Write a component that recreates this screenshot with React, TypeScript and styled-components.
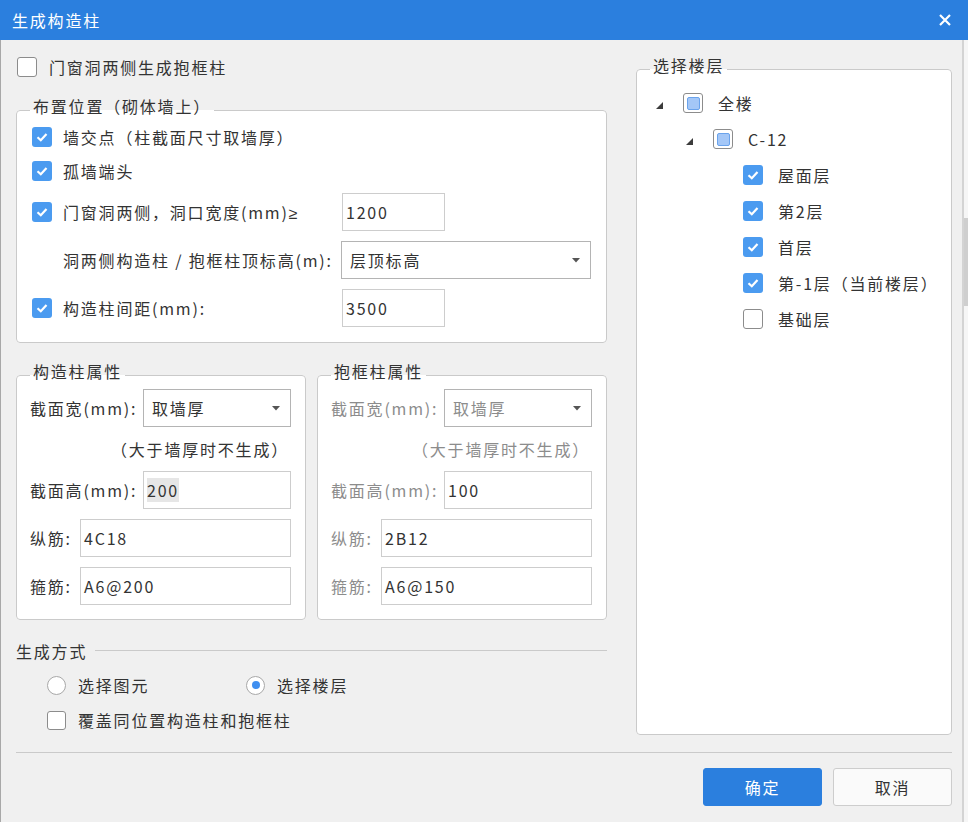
import React from 'react';
import styled, { createGlobalStyle } from 'styled-components';

const GlobalStyle = createGlobalStyle`
  html, body {
    margin: 0;
    padding: 0;
    background: #f0f0f0;
  }
  body {
    font-family: 'Noto Sans CJK SC', 'Noto Sans', sans-serif;
    font-size: 16px;
    letter-spacing: 1.8px;
    color: #333;
  }
  * {
    box-sizing: border-box;
  }
`;

const Window = styled.div`
  width: 968px;
  height: 822px;
  display: flex;
  flex-direction: column;
  overflow: hidden;
`;

const TitleBar = styled.div`
  flex: 0 0 40px;
  background: #2b7fde;
  color: #fff;
  display: flex;
  align-items: center;
  justify-content: space-between;
  padding: 0 17px 0 12px;
`;

const CloseButton = styled.span`
  display: flex;
  width: 12px;
  height: 12px;
`;

const Main = styled.div`
  flex: 1;
  display: flex;
`;

const Body = styled.div`
  width: 962px;
  border-left: 1px solid #a8a8a8;
  padding: 0 10px 0 15px;
  display: flex;
  flex-direction: column;
`;

const SideStrip = styled.div`
  flex: 1;
  border-left: 2px solid #d4d4d4;
  background: #f6f6f6;
  padding-top: 178px;
`;

const Thumb = styled.div`
  height: 88px;
  background: #cfcfcf;
`;

const Columns = styled.div`
  display: flex;
  align-items: flex-start;
`;

const LeftCol = styled.div`
  width: 591px;
  display: flex;
  flex-direction: column;
`;

const RightCol = styled.div`
  width: 316px;
  margin-left: 29px;
`;

const Row = styled.div<{ $h?: number; $mt?: number; $indent?: number }>`
  display: flex;
  align-items: center;
  height: ${(p) => p.$h ?? 24}px;
  margin-top: ${(p) => p.$mt ?? 0}px;
  padding-left: ${(p) => p.$indent ?? 0}px;
`;

const Group = styled.fieldset<{ $mt: number; $h?: number }>`
  margin: ${(p) => p.$mt}px 0 0;
  border: 1px solid #cacaca;
  border-radius: 4px;
  background: #fff;
  min-width: 0;
  ${(p) => (p.$h ? `height: ${p.$h}px;` : '')}
`;

const Legend = styled.legend<{ $ml: number }>`
  line-height: 20px;
  padding: 0 3px 8px;
  margin-left: ${(p) => p.$ml}px;
  color: #333;
`;

const PlaceGroup = styled(Group)`
  padding: 1px 15px 15px;
  display: flex;
  flex-direction: column;
  gap: 10px;
`;

const PropsRow = styled.div`
  display: flex;
  gap: 11px;
`;

const PropGroup = styled(Group)`
  flex: 1;
  padding: 0 14px 14px 13px;
  display: flex;
  flex-direction: column;
  gap: 10px;
`;

const Box = styled.span<{ $state: 'on' | 'off' | 'mixed'; $size: number }>`
  flex: 0 0 ${(p) => p.$size}px;
  width: ${(p) => p.$size}px;
  height: ${(p) => p.$size}px;
  border-radius: 3px;
  display: flex;
  align-items: center;
  justify-content: center;
  background: ${(p) => (p.$state === 'on' ? '#4b9bf0' : '#fff')};
  border: ${(p) => (p.$state === 'on' ? 'none' : '1.5px solid #8c8c8c')};
`;

const MixedFill = styled.span`
  width: 13px;
  height: 13px;
  border-radius: 2px;
  background: #a4c7f7;
  border: 1px solid #6aa3ec;
`;

const Check = ({ state, size = 20 }: { state: 'on' | 'off' | 'mixed'; size?: number }) => (
  <Box $state={state} $size={size}>
    {state === 'on' && (
      <svg width="14" height="14" viewBox="0 0 14 14">
        <polyline points="2.5,7.2 5.8,10.2 11.5,4" fill="none" stroke="#fff" strokeWidth="2.2" />
      </svg>
    )}
    {state === 'mixed' && <MixedFill />}
  </Box>
);

const Spacer = styled.span<{ $w: number }>`
  flex: 0 0 ${(p) => p.$w}px;
`;

const Label = styled.span<{ $w?: number; $ml?: number; $muted?: boolean }>`
  ${(p) => (p.$w ? `flex: 0 0 ${p.$w}px;` : '')}
  margin-left: ${(p) => p.$ml ?? 0}px;
  color: ${(p) => (p.$muted ? '#8c8c8c' : '#333')};
  white-space: nowrap;
`;

const Symbol = styled.span`
  font-family: 'Liberation Sans', sans-serif;
  letter-spacing: 0;
`;

const Field = styled.div<{ $w?: number }>`
  height: 38px;
  ${(p) => (p.$w ? `width: ${p.$w}px;` : 'flex: 1;')}
  border: 1px solid #cdcdcd;
  background: #fff;
  padding: 0 3px;
  display: flex;
  align-items: center;
  color: #333;
`;

const Selected = styled.span`
  background: #e6e6e6;
`;

const Select = styled.div<{ $w?: number; $muted?: boolean }>`
  height: 38px;
  ${(p) => (p.$w ? `width: ${p.$w}px;` : 'flex: 1;')}
  border: 1px solid #b4b4b4;
  background: #fff;
  padding: 0 10px 0 8px;
  display: flex;
  align-items: center;
  justify-content: space-between;
  color: ${(p) => (p.$muted ? '#8c8c8c' : '#333')};
`;

const Arrow = () => (
  <svg width="8" height="5" viewBox="0 0 8 5">
    <polygon points="0,0 8,0 4,4.5" fill="#555" />
  </svg>
);

const Note = styled.div<{ $muted?: boolean }>`
  height: 24px;
  display: flex;
  align-items: center;
  justify-content: flex-end;
  padding-right: 2px;
  color: ${(p) => (p.$muted ? '#8c8c8c' : '#333')};
`;

const SectionHead = styled.div`
  display: flex;
  align-items: center;
  height: 20px;
  margin-top: 21px;
  &::after {
    content: '';
    flex: 1;
    height: 1px;
    margin: -1px 0 0 8px;
    background: #cacaca;
  }
`;

const Radio = styled.span<{ $on?: boolean }>`
  flex: 0 0 19px;
  width: 19px;
  height: 19px;
  border-radius: 50%;
  border: 1.5px solid #a8a8a8;
  background: #fff;
  display: flex;
  align-items: center;
  justify-content: center;
  &::after {
    content: '';
    width: 8px;
    height: 8px;
    border-radius: 50%;
    background: ${(p) => (p.$on ? '#3f8ff0' : 'transparent')};
  }
`;

const RadioItem = styled.span<{ $w?: number }>`
  display: flex;
  align-items: center;
  ${(p) => (p.$w ? `width: ${p.$w}px;` : '')}
`;

const Tree = styled(Group)`
  padding: 2px 10px 0 19px;
`;

const TreeRow = styled.div<{ $level: number }>`
  height: 36px;
  display: flex;
  align-items: center;
  padding-left: ${(p) => p.$level * 30}px;
`;

const Toggle = styled.span`
  flex: 0 0 27px;
  display: flex;
  padding-top: 4px;
`;

const TreeText = styled.span`
  margin-left: 15px;
  white-space: nowrap;
`;

const Divider = styled.div`
  height: 1px;
  background: #cacaca;
  margin-top: 17px;
`;

const Footer = styled.div`
  display: flex;
  justify-content: flex-end;
  gap: 11px;
  margin-top: 15px;
`;

const Button = styled.button<{ $primary?: boolean }>`
  width: 119px;
  height: 38px;
  border-radius: 3px;
  font: inherit;
  letter-spacing: inherit;
  border: 1px solid ${(p) => (p.$primary ? '#2b7fde' : '#cdcdcd')};
  background: ${(p) => (p.$primary ? '#2b7fde' : '#fafafa')};
  color: ${(p) => (p.$primary ? '#fff' : '#333')};
`;

const Caret = () => (
  <svg width="7" height="7" viewBox="0 0 7 7">
    <polygon points="7,0 7,7 0,7" fill="#3c3c3c" />
  </svg>
);

type Floor = { label: string; level: number; state: 'on' | 'off' | 'mixed'; open?: boolean };

const floors: Floor[] = [
  { label: '全楼', level: 0, state: 'mixed', open: true },
  { label: 'C-12', level: 1, state: 'mixed', open: true },
  { label: '屋面层', level: 2, state: 'on' },
  { label: '第2层', level: 2, state: 'on' },
  { label: '首层', level: 2, state: 'on' },
  { label: '第-1层（当前楼层）', level: 2, state: 'on' },
  { label: '基础层', level: 2, state: 'off' },
];

type PropsData = {
  title: string;
  muted?: boolean;
  height: React.ReactNode;
  main: string;
  stirrup: string;
};

const PropsBox = ({ title, muted, height, main, stirrup }: PropsData) => (
  <PropGroup $mt={18}>
    <Legend $ml={0}>{title}</Legend>
    <Row $h={38}>
      <Label $w={113} $muted={muted}>截面宽(mm):</Label>
      <Select $muted={muted}>
        取墙厚
        <Arrow />
      </Select>
    </Row>
    <Note $muted={muted}>（大于墙厚时不生成）</Note>
    <Row $h={38}>
      <Label $w={113} $muted={muted}>截面高(mm):</Label>
      <Field>{height}</Field>
    </Row>
    <Row $h={38}>
      <Label $w={50} $muted={muted}>纵筋:</Label>
      <Field>{main}</Field>
    </Row>
    <Row $h={38}>
      <Label $w={50} $muted={muted}>箍筋:</Label>
      <Field>{stirrup}</Field>
    </Row>
  </PropGroup>
);

export default function App() {
  return (
    <Window>
      <GlobalStyle />
      <TitleBar>
        <span>生成构造柱</span>
        <CloseButton>
          <svg width="12" height="12" viewBox="0 0 12 12">
            <path d="M1 1L11 11M11 1L1 11" stroke="#fff" strokeWidth="2.2" />
          </svg>
        </CloseButton>
      </TitleBar>
      <Main>
        <Body>
          <Columns>
            <LeftCol>
              <Row $h={20} $mt={17} $indent={1}>
                <Check state="off" />
                <Label $ml={12}>门窗洞两侧生成抱框柱</Label>
              </Row>

              <PlaceGroup $mt={19}>
                <Legend $ml={-2}>布置位置（砌体墙上）</Legend>
                <Row>
                  <Check state="on" />
                  <Label $ml={11}>墙交点（柱截面尺寸取墙厚）</Label>
                </Row>
                <Row>
                  <Check state="on" />
                  <Label $ml={11}>孤墙端头</Label>
                </Row>
                <Row $h={38}>
                  <Check state="on" />
                  <Label $ml={11} $w={279}>
                    门窗洞两侧，洞口宽度(mm)<Symbol>≥</Symbol>
                  </Label>
                  <Field $w={103}>1200</Field>
                </Row>
                <Row $h={38}>
                  <Spacer $w={20} />
                  <Label $ml={11} $w={278}>洞两侧构造柱 / 抱框柱顶标高(m):</Label>
                  <Select>
                    层顶标高
                    <Arrow />
                  </Select>
                </Row>
                <Row $h={38}>
                  <Check state="on" />
                  <Label $ml={11} $w={279}>构造柱间距(mm):</Label>
                  <Field $w={103}>3500</Field>
                </Row>
              </PlaceGroup>

              <PropsRow>
                <PropsBox
                  title="构造柱属性"
                  height={<Selected>200</Selected>}
                  main="4C18"
                  stirrup="A6@200"
                />
                <PropsBox title="抱框柱属性" muted height="100" main="2B12" stirrup="A6@150" />
              </PropsRow>

              <SectionHead>生成方式</SectionHead>
              <Row $mt={12} $indent={31}>
                <RadioItem $w={199}>
                  <Radio />
                  <Label $ml={12}>选择图元</Label>
                </RadioItem>
                <RadioItem>
                  <Radio $on />
                  <Label $ml={12}>选择楼层</Label>
                </RadioItem>
              </Row>
              <Row $mt={11} $indent={31}>
                <Check state="off" size={19} />
                <Label $ml={12}>覆盖同位置构造柱和抱框柱</Label>
              </Row>
            </LeftCol>

            <RightCol>
              <Tree $mt={15} $h={680}>
                <Legend $ml={-6}>选择楼层</Legend>
                {floors.map((f) => (
                  <TreeRow key={f.label} $level={f.level}>
                    <Toggle>{f.open && <Caret />}</Toggle>
                    <Check state={f.state} />
                    <TreeText>{f.label}</TreeText>
                  </TreeRow>
                ))}
              </Tree>
            </RightCol>
          </Columns>

          <Divider />
          <Footer>
            <Button $primary>确定</Button>
            <Button>取消</Button>
          </Footer>
        </Body>
        <SideStrip>
          <Thumb />
        </SideStrip>
      </Main>
    </Window>
  );
}
